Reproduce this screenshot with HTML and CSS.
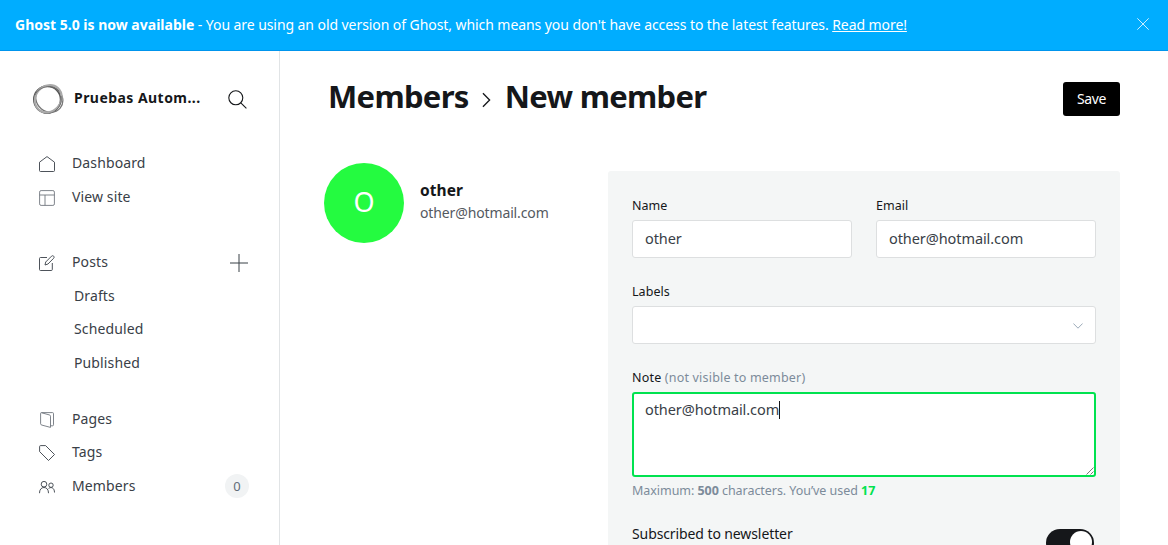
FILE: index.html
```html
<!DOCTYPE html>
<html lang="en">
<head>
<meta charset="utf-8">
<title>Ghost Admin</title>
<link rel="stylesheet" href="styles.css">
</head>
<body>
<div class="alert">
  <p><b class="alert-lead">Ghost 5.0 is now available</b><span class="alert-text"> - You are using an old version of Ghost, which means you don't have access to the latest features. <a href="#">Read more!</a></span></p>
  <svg class="close" viewBox="0 0 12 12"><path d="M.3.3l11.4 11.4M11.7.3L.3 11.7"/></svg>
</div>
<div class="app">
  <aside class="sidebar">
    <header class="brand">
      <svg class="logo" viewBox="0 0 32 32"><circle cx="15.200" cy="16.600" r="13.400" stroke="#555" stroke-width="1.600"/><ellipse cx="17" cy="15.200" rx="14.200" ry="12.600" stroke="#777" stroke-width="1.300" transform="rotate(40 16 16)"/><ellipse cx="16.400" cy="16" rx="14.400" ry="12.600" stroke="#aaa" stroke-width="2" transform="rotate(-48 16 16)"/><path d="M3 12C7 3 20 1 27 8M29 13c1 6-1 11-6 15" stroke="#666" stroke-width=".8"/></svg>
      <span class="site">Pruebas Autom...</span>
      <svg class="search" viewBox="0 0 19 19"><circle cx="7.800" cy="7.800" r="7"/><path d="M12.800 12.800l5.600 5.600"/></svg>
    </header>
    <nav>
      <a class="item"><svg viewBox="0 0 16 16"><path d="M.5 6.200L8 .6l7.500 5.600v8.300a1 1 0 0 1-1 1h-13a1 1 0 0 1-1-1z"/></svg><span>Dashboard</span></a>
      <a class="item site-link"><svg class="soft" viewBox="0 0 16 16"><rect x=".6" y=".6" width="14.800" height="14.800" rx="1.500"/><path d="M.6 5h14.800M6 5v10.400"/></svg><span>View site</span></a>
    </nav>
    <nav class="posts">
      <a class="item"><svg viewBox="0 0 16 16"><path d="M8 2.500H1.500a1 1 0 0 0-1 1v11a1 1 0 0 0 1 1h10.800a1 1 0 0 0 1-1V8M6 10l.7-3L12.500 1.200c1.500-1.400 3.500.6 2.100 2.100L9 9z"/></svg><span>Posts</span><svg class="plus" viewBox="0 0 18 18"><path d="M9 0v18M0 9h18"/></svg></a>
      <a class="item sub"><span>Drafts</span></a>
      <a class="item sub"><span>Scheduled</span></a>
      <a class="item sub"><span>Published</span></a>
    </nav>
    <nav class="content">
      <a class="item"><svg class="soft" viewBox="0 0 16 16"><path d="M2.500.6h11a1 1 0 0 1 1 1v11.200a1 1 0 0 1-1 1h-2M2.300.7l8 2.200c.8.2 1.200.6 1.200 1.300v11.200l-8.600-2.300c-.8-.2-1.300-.6-1.300-1.300V1.300c0-.4.300-.7.700-.6z"/></svg><span>Pages</span></a>
      <a class="item"><svg viewBox="0 0 16 16"><path d="M.6 1.600a1 1 0 0 1 1-1h5l8.900 8.900-6 6L.6 6.600z"/></svg><span>Tags</span></a>
      <a class="item"><svg viewBox="0 0 16 16"><circle cx="5" cy="5.200" r="2.800"/><circle cx="12" cy="6.200" r="2.200"/><path d="M.5 14.200C.5 10.500 2.300 8.500 5 8.500s4.500 2 4.500 5.700M9.600 9.500c2.500-2 5.900-.7 5.900 4"/></svg><span>Members</span><b class="badge">0</b></a>
    </nav>
  </aside>
  <main>
    <header class="head">
      <h1><span>Members</span><svg viewBox="0 0 10 18"><path d="M1 1.500L8.500 9 1 16.500"/></svg><span class="current">New member</span></h1>
      <button class="save">Save</button>
    </header>
    <div class="cols">
      <section class="profile">
        <div class="avatar">O</div>
        <div class="who"><h3>other</h3><p>other@hotmail.com</p></div>
      </section>
      <form class="card">
        <div class="pair">
          <div><label>Name</label><div class="input">other</div></div>
          <div><label>Email</label><div class="input">other@hotmail.com</div></div>
        </div>
        <label>Labels</label>
        <div class="input select"><svg viewBox="0 0 10 6"><path d="M.4.500L5 5.200 9.600.5"/></svg></div>
        <label class="note-label">Note <em>(not visible to member)</em></label>
        <div class="input note"><span>other@hotmail.com</span><i class="caret"></i><svg class="grip" viewBox="0 0 8 8"><path d="M.5 7.500l7-7M4.500 7.500l3-3"/></svg></div>
        <p class="hint">Maximum: <b>500</b> characters. You’ve used <b class="count">17</b></p>
        <div class="newsletter"><span>Subscribed to newsletter</span><i class="switch"></i></div>
      </form>
    </div>
  </main>
</div>
</body>
</html>
```
FILE: styles.css
```css
* { box-sizing: border-box; }
body { margin: 0; height: 545px; overflow: hidden; background: #fff; color: #15171a; font: 14px/20px "Noto Sans", "Open Sans", sans-serif; }
p, h1, h3 { margin: 0; }
svg { fill: none; stroke: #394047; flex: none; display: block; }
.alert { height: 51px; padding: 0 19px 1px 15px; display: flex; align-items: center; justify-content: space-between; background: #00adff; border-bottom: 1px solid #0095ed; color: #fff; white-space: nowrap; }
.alert-text { letter-spacing: -.072px; }
.alert a { color: #fff; text-decoration: underline; }
.close { width: 12px; height: 12px; margin-bottom: 2px; stroke: #fff; stroke-width: .8; }
.app { display: flex; height: 494px; }
.sidebar { width: 280px; flex: none; border-right: 1px solid #e1e4e6; padding: 32px 31px 0 32px; white-space: nowrap; }
.brand { display: flex; align-items: center; height: 32px; margin-bottom: 31px; }
.logo { width: 32px; height: 32px; }
.site { font-weight: 700; margin: -2px 0 0 10px; flex: 1; letter-spacing: .45px; }
.search { width: 19px; height: 19px; margin-right: 1px; stroke: #15171a; stroke-width: 1.100; }
.item { display: flex; align-items: center; height: 33.600px; padding-left: 7px; color: #394047; letter-spacing: .12px; }
.item > svg { width: 16px; height: 16px; stroke-width: .9; margin-top: 2px; }
.item > svg.soft { stroke: #71767e; }
.item > span { flex: 1; margin-left: 17px; }
.item.sub > span { margin-left: 35px; }
.item > .plus { width: 18px; height: 18px; stroke-width: 1; }
.site-link { margin-top: 1px; }
.posts { margin-top: 31px; }
.content { margin-top: 22.400px; }
.badge { width: 24px; height: 24px; margin: 1px -1px 0 0; border-radius: 12px; background: #f1f3f4; font-weight: 400; font-size: 13px; line-height: 24px; text-align: center; color: #626d79; }
main { flex: 1; padding: 31px 48px 0 44px; }
.head { display: flex; justify-content: space-between; height: 34px; }
h1 { display: flex; align-items: center; font-size: 31px; letter-spacing: -.68px; line-height: 34px; white-space: nowrap; margin-left: 4px; height: 28px; }
h1 svg { width: 9px; height: 16px; margin: 7px 14px 0 13px; stroke-width: 1.500; stroke: #15171a; }
.save { width: 57px; height: 34px; padding: 0; border: 0; border-radius: 3px; background: #000; color: #fff; font: inherit; letter-spacing: -.4px; }
.cols { display: flex; justify-content: space-between; padding-top: 47px; }
.profile { display: flex; align-items: center; height: 80px; }
.avatar { width: 80px; height: 80px; border-radius: 50%; background: #24fb40; color: #fff; font-size: 27px; line-height: 78px; text-align: center; margin-right: 16px; }
.who { padding-bottom: 4px; }
.profile h3 { font-size: 15.500px; line-height: 22px; letter-spacing: .05px; margin-bottom: 1px; }
.profile p { line-height: 22px; color: #54595f; letter-spacing: -.13px; }
.card { width: 512px; height: 400px; margin-top: 8px; padding: 25px 24px 24px; border-radius: 3px; background: #f4f6f6; }
.pair { display: grid; grid-template-columns: 1fr 1fr; gap: 24px; }
label { display: block; font-size: 12.500px; line-height: 20px; margin-bottom: 4px; letter-spacing: .05px; }
.note-label { letter-spacing: .19px; }
em { font-style: normal; color: #7c8b9a; }
.input { height: 38px; border: 1px solid #dddfe0; border-radius: 3px; background: #fff; padding: 0 12px 2px; display: flex; align-items: center; color: #394047; margin-bottom: 24px; font-size: 14.500px; letter-spacing: -.08px; }
.select { justify-content: flex-end; padding-bottom: 0; }
.select svg { width: 10px; height: 6px; margin-top: 2px; stroke: #9baab8; }
.note { height: 85px; align-items: flex-start; border: 2px solid #00e24f; padding: 5px 11px; position: relative; margin-bottom: 4px; }
.caret { width: 1px; height: 18px; margin-top: 2px; background: #15171a; }
.grip { position: absolute; width: 8px; height: 8px; right: 0; bottom: 0; stroke: #555; stroke-width: .8; }
.hint { font-size: 12.500px; color: #7c8b9a; letter-spacing: -.05px; }
.hint .count { color: #00e24f; }
.newsletter { display: flex; justify-content: space-between; margin-top: 23px; letter-spacing: -.1px; }
.switch { width: 48px; height: 28px; margin: 5px 2px 0 0; background: #15171a; border-radius: 14px; padding: 2px; }
.switch::after { content: ""; display: block; width: 22px; height: 22px; border-radius: 50%; background: #fff; margin-left: 22px; }
```
